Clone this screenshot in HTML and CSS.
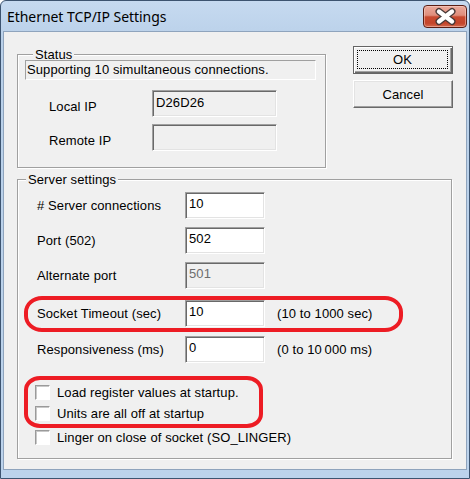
FILE: index.html
```html
<!DOCTYPE html>
<html>
<head>
<meta charset="utf-8">
<link rel="stylesheet" href="styles.css">
</head>
<body>
<div class="window">
  <div class="titlebar">
    <span class="title">Ethernet TCP/IP Settings</span>
    <div class="close">
      <svg width="42" height="21" viewBox="0 0 42 21">
        <path d="M15 5.5 L28 15.5 M28 5.5 L15 15.5" stroke="#4a3a38" stroke-width="7" stroke-linecap="round" fill="none"/>
        <path d="M15 5.5 L28 15.5 M28 5.5 L15 15.5" stroke="#ffffff" stroke-width="4.4" stroke-linecap="round" fill="none"/>
      </svg>
    </div>
  </div>
  <div class="client">
    <div class="top-row">
      <fieldset class="group status-group">
        <legend>Status</legend>
        <div class="status-text">Supporting 10 simultaneous connections.</div>
        <div class="row ip-row first-ip">
          <span class="ip-label">Local IP</span>
          <div class="edit readonly ip-edit">D26D26</div>
        </div>
        <div class="row ip-row">
          <span class="ip-label">Remote IP</span>
          <div class="edit readonly ip-edit"></div>
        </div>
      </fieldset>
      <div class="buttons">
        <div class="btn default"><span class="focus">OK</span></div>
        <div class="btn">Cancel</div>
      </div>
    </div>
    <fieldset class="group server-group">
      <legend>Server settings</legend>
      <div class="row srv-row r1">
        <span class="srv-label">#&nbsp;Server connections</span>
        <div class="edit srv-edit">10</div>
      </div>
      <div class="row srv-row r2">
        <span class="srv-label">Port (502)</span>
        <div class="edit srv-edit">502</div>
      </div>
      <div class="row srv-row r3">
        <span class="srv-label">Alternate port</span>
        <div class="edit srv-edit disabled">501</div>
      </div>
      <div class="row srv-row r4">
        <span class="srv-label">Socket Timeout (sec)</span>
        <div class="edit srv-edit">10</div>
        <span class="hint">(10 to 1000 sec)</span>
      </div>
      <div class="row srv-row r5">
        <span class="srv-label">Responsiveness (ms)</span>
        <div class="edit srv-edit">0</div>
        <span class="hint">(0 to 10&#8201;000 ms)</span>
      </div>
      <div class="check c1"><span class="box"></span><span class="cb-label">Load register values at startup.</span></div>
      <div class="check c2"><span class="box"></span><span class="cb-label">Units are all off at startup</span></div>
      <div class="check c3"><span class="box"></span><span class="cb-label">Linger on close of socket (SO_LINGER)</span></div>
    </fieldset>
    <div class="ring ring1"></div>
    <div class="ring ring2"></div>
  </div>
</div>
</body>
</html>
```
FILE: styles.css
```css
html, body {
  margin: 0;
  padding: 0;
  background: #ffffff;
}

.window {
  width: 470px;
  height: 479px;
  box-sizing: border-box;
  border: 1px solid #3d5470;
  border-radius: 6px 6px 0 0;
  background: linear-gradient(#c6daf0, #b9d0e9 40px, #bcd3ec);
  display: flex;
  flex-direction: column;
  overflow: hidden;
}

.titlebar {
  height: 30px;
  display: flex;
  align-items: flex-start;
  justify-content: space-between;
  flex: none;
}

.title {
  font-family: "Noto Sans", "Open Sans", sans-serif;
  font-size: 14px;
  line-height: 20px;
  color: #000;
  margin: 6px 0 0 6px;
  letter-spacing: -0.05px;
}

.close {
  width: 44px;
  height: 23px;
  box-sizing: border-box;
  margin: 4px 2px 0 0;
  border: 1px solid #5a1e14;
  border-radius: 4px;
  background: linear-gradient(#eaaa9c 0%, #df8d7b 44%, #c84a2f 52%, #c4452b 82%, #d56a4e 100%);
  box-shadow: inset 0 0 0 1px rgba(255, 220, 210, 0.45);
  display: flex;
  align-items: center;
  justify-content: center;
}

.close svg {
  display: block;
}

.client {
  position: relative;
  flex: 1;
  margin: 0 2px 8px 2px;
  border: 1px solid #8fa4bd;
  background: #f0f0f0;
  padding: 14px 0 0 13px;
  font-family: "Liberation Sans", Arial, sans-serif;
  font-size: 13px;
  line-height: 15px;
  color: #000;
  letter-spacing: 0.1px;
}

.top-row {
  display: flex;
  align-items: flex-start;
}

.group {
  margin: 0;
  padding: 0;
  min-width: 0;
  border: 1px solid #a0a0a0;
  box-shadow: inset 1px 1px 0 #ffffff, 1px 1px 0 #ffffff;
  box-sizing: border-box;
}

.group legend {
  padding: 0 2px 0 2px;
  margin-left: 8px;
  background: #f0f0f0;
  line-height: 15px;
}

.status-group {
  width: 309px;
  margin-top: 1px;
  padding: 0 0 16px 7px;
}

.status-text {
  margin-top: -2px;
  width: 291px;
  height: 20px;
  box-sizing: border-box;
  border: 1px solid;
  border-color: #a0a0a0 #ffffff #ffffff #a0a0a0;
  padding: 1px 0 0 1px;
  white-space: nowrap;
}

.row {
  display: flex;
  align-items: center;
}

.ip-row {
  margin-top: 7px;
}

.ip-row.first-ip {
  margin-top: 10px;
}

.ip-label {
  width: 103px;
  padding-left: 24px;
  margin-top: 5px;
  flex: none;
}

.edit {
  height: 27px;
  box-sizing: border-box;
  border: 1px solid;
  border-color: #a0a0a0 #ffffff #ffffff #a0a0a0;
  box-shadow: inset 1px 1px 0 #696969, inset -1px -1px 0 #e3e3e3;
  background: #ffffff;
  padding: 3px 3px 0 3px;
  white-space: nowrap;
  flex: none;
}

.edit.readonly {
  background: #f0f0f0;
}

.edit.disabled {
  background: #f0f0f0;
  color: #6d6d6d;
}

.ip-edit {
  width: 125px;
  padding-top: 4px;
}

.buttons {
  margin-left: 27px;
  display: flex;
  flex-direction: column;
  gap: 6px;
}

.btn {
  width: 100px;
  height: 28px;
  box-sizing: border-box;
  border: 1px solid;
  border-color: #ffffff #696969 #696969 #ffffff;
  box-shadow: inset -1px -1px 0 #a0a0a0, inset 1px 1px 0 #e3e3e3;
  background: #f0f0f0;
  display: flex;
  align-items: center;
  justify-content: center;
}

.btn.default {
  border: 1px solid #646464;
  box-shadow: inset 1px 1px 0 #ffffff, inset -1px -1px 0 #696969, inset -2px -2px 0 #a0a0a0;
  padding: 3px 4px 4px 3px;
}

.focus {
  flex: 1;
  align-self: stretch;
  border: 1px dotted #000000;
  display: flex;
  align-items: center;
  justify-content: center;
}

.server-group {
  width: 435px;
  margin-top: 4px;
  padding: 0 0 13px 0;
}

.srv-row {
  margin-top: 8px;
}

.srv-row.r1 {
  margin-top: 5px;
}

.srv-row.r4 {
  margin-top: 11px;
}

.srv-row.r5 {
  margin-top: 9px;
}

.srv-label {
  width: 148px;
  padding-left: 19px;
  flex: none;
}

.srv-edit {
  width: 80px;
}

.hint {
  margin-left: 12px;
}

.check {
  display: flex;
  align-items: center;
  height: 15px;
  padding-left: 17px;
}

.check.c1 {
  margin-top: 22px;
}

.check.c2 {
  margin-top: 6px;
}

.check.c3 {
  margin-top: 9px;
}

.box {
  width: 15px;
  height: 15px;
  box-sizing: border-box;
  border: 1px solid;
  border-color: #9a9a9a #ffffff #ffffff #9a9a9a;
  box-shadow: inset 1px 1px 0 #c8c8c8;
  background: #ffffff;
  flex: none;
}

.cb-label {
  margin-left: 7px;
  white-space: nowrap;
}

.ring {
  position: absolute;
  box-sizing: border-box;
  border: 4px solid #ed1c24;
}

.ring1 {
  left: 20px;
  top: 264px;
  width: 379px;
  height: 36px;
  border-radius: 18px / 16px;
}

.ring2 {
  left: 20px;
  top: 344px;
  width: 239px;
  height: 52px;
  border-radius: 16px / 14px;
}
```
